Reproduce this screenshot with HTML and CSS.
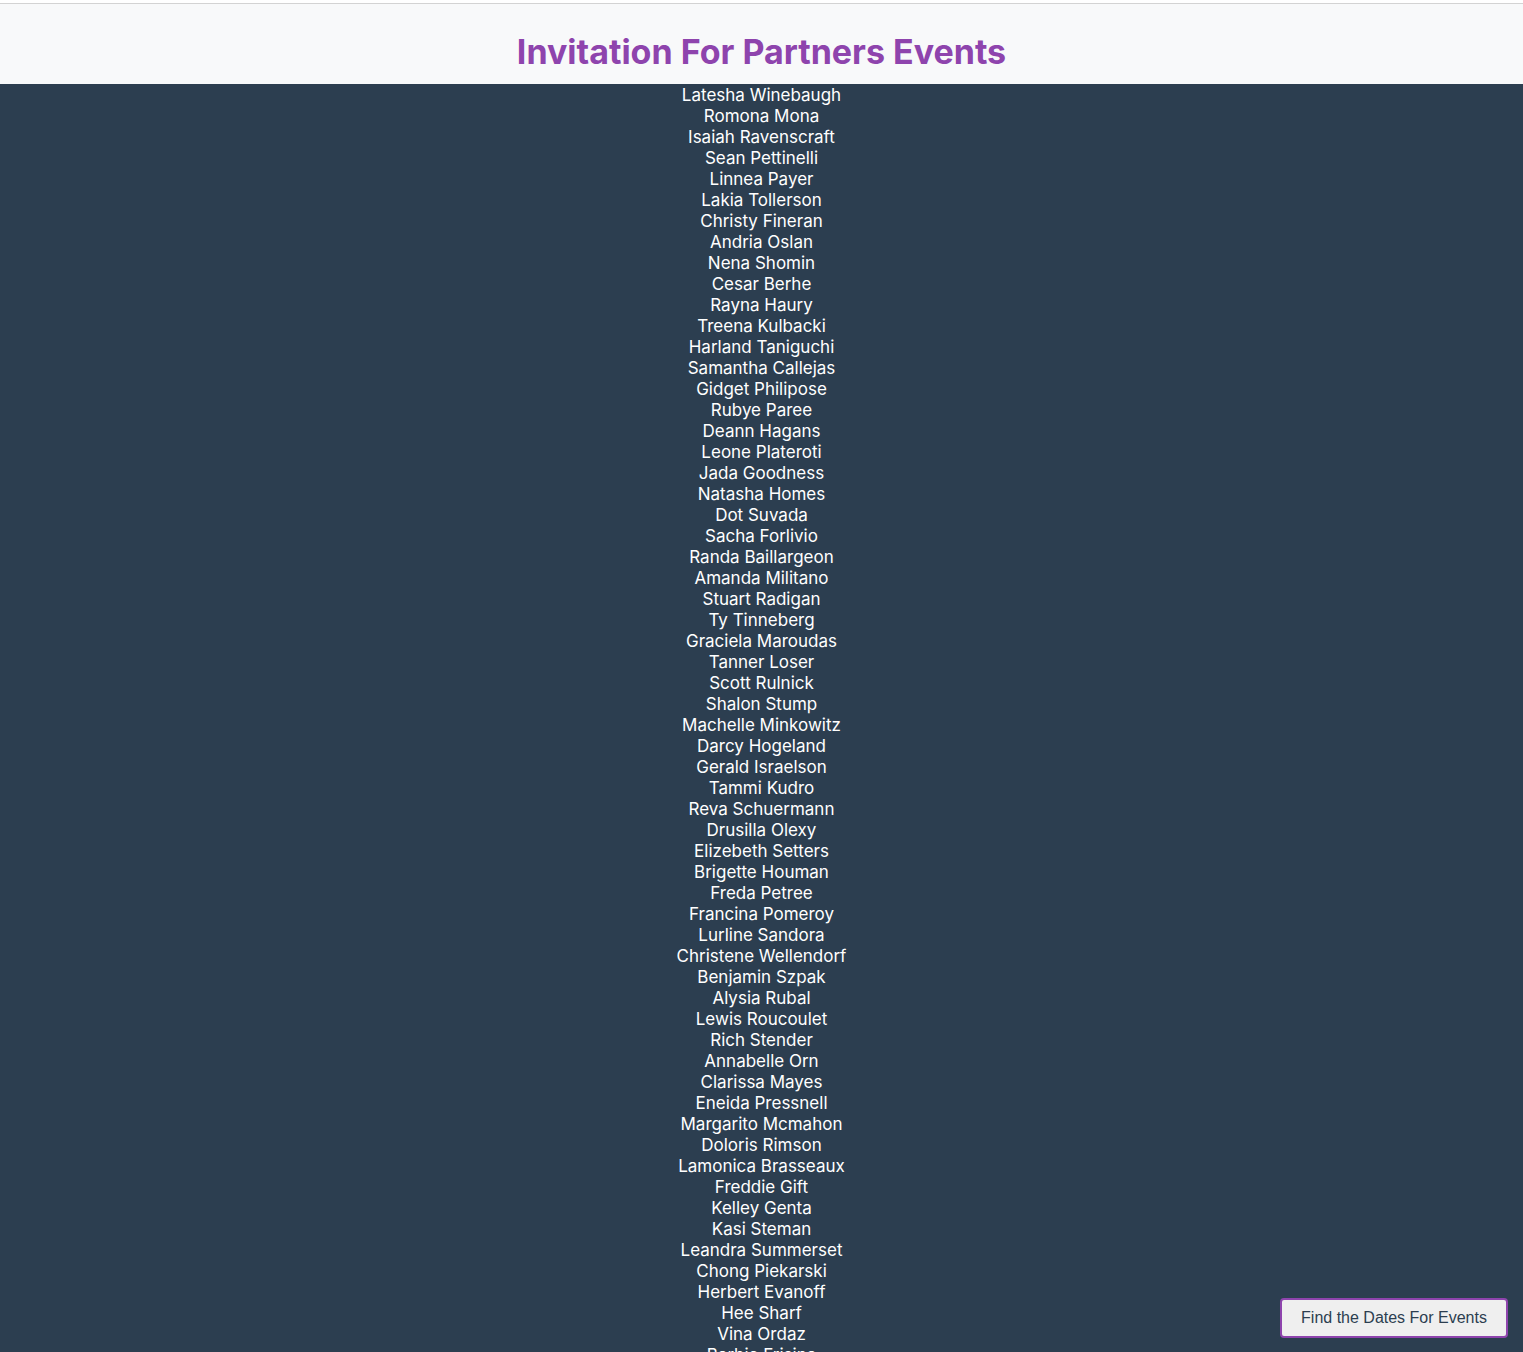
FILE: index.html
```html
<!DOCTYPE html>
<html lang="en">
<head>
<meta charset="utf-8">
<title>Invitation For Partners Events</title>
<link rel="stylesheet" href="styles.css">
</head>
<body>
<div class="topline"></div>
<header class="header">
  <h1 class="title">Invitation For Partners Events</h1>
</header>
<main class="list">
  <div class="name">Latesha Winebaugh</div>
  <div class="name">Romona Mona</div>
  <div class="name">Isaiah Ravenscraft</div>
  <div class="name">Sean Pettinelli</div>
  <div class="name">Linnea Payer</div>
  <div class="name">Lakia Tollerson</div>
  <div class="name">Christy Fineran</div>
  <div class="name">Andria Oslan</div>
  <div class="name">Nena Shomin</div>
  <div class="name">Cesar Berhe</div>
  <div class="name">Rayna Haury</div>
  <div class="name">Treena Kulbacki</div>
  <div class="name">Harland Taniguchi</div>
  <div class="name">Samantha Callejas</div>
  <div class="name">Gidget Philipose</div>
  <div class="name">Rubye Paree</div>
  <div class="name">Deann Hagans</div>
  <div class="name">Leone Plateroti</div>
  <div class="name">Jada Goodness</div>
  <div class="name">Natasha Homes</div>
  <div class="name">Dot Suvada</div>
  <div class="name">Sacha Forlivio</div>
  <div class="name">Randa Baillargeon</div>
  <div class="name">Amanda Militano</div>
  <div class="name">Stuart Radigan</div>
  <div class="name">Ty Tinneberg</div>
  <div class="name">Graciela Maroudas</div>
  <div class="name">Tanner Loser</div>
  <div class="name">Scott Rulnick</div>
  <div class="name">Shalon Stump</div>
  <div class="name">Machelle Minkowitz</div>
  <div class="name">Darcy Hogeland</div>
  <div class="name">Gerald Israelson</div>
  <div class="name">Tammi Kudro</div>
  <div class="name">Reva Schuermann</div>
  <div class="name">Drusilla Olexy</div>
  <div class="name">Elizebeth Setters</div>
  <div class="name">Brigette Houman</div>
  <div class="name">Freda Petree</div>
  <div class="name">Francina Pomeroy</div>
  <div class="name">Lurline Sandora</div>
  <div class="name">Christene Wellendorf</div>
  <div class="name">Benjamin Szpak</div>
  <div class="name">Alysia Rubal</div>
  <div class="name">Lewis Roucoulet</div>
  <div class="name">Rich Stender</div>
  <div class="name">Annabelle Orn</div>
  <div class="name">Clarissa Mayes</div>
  <div class="name">Eneida Pressnell</div>
  <div class="name">Margarito Mcmahon</div>
  <div class="name">Doloris Rimson</div>
  <div class="name">Lamonica Brasseaux</div>
  <div class="name">Freddie Gift</div>
  <div class="name">Kelley Genta</div>
  <div class="name">Kasi Steman</div>
  <div class="name">Leandra Summerset</div>
  <div class="name">Chong Piekarski</div>
  <div class="name">Herbert Evanoff</div>
  <div class="name">Hee Sharf</div>
  <div class="name">Vina Ordaz</div>
  <div class="name">Barbie Frisina</div>
</main>
<button class="find-btn" type="button">Find the Dates For Events</button>
</body>
</html>
```

FILE: styles.css
```css
html, body {
  margin: 0;
  padding: 0;
}
body {
  background: #2c3e50;
  font-family: Inter, "Noto Sans", sans-serif;
}
.topline {
  height: 3px;
  background: #ffffff;
  border-bottom: 1px solid #d3d3d3;
}
.header {
  background: #f8f9fa;
  height: 80px;
  display: flex;
  align-items: center;
  justify-content: center;
}
.title {
  margin: 0;
  padding-top: 14px;
  font-size: 34px;
  font-weight: 700;
  color: #8e44ad;
  letter-spacing: 0;
}
.list {
  display: flex;
  flex-direction: column;
  align-items: center;
  padding-top: 1px;
}
.name {
  color: #ffffff;
  font-size: 17px;
  line-height: 21px;
}
.find-btn {
  position: fixed;
  right: 15px;
  bottom: 14px;
  width: 228px;
  height: 40px;
  background: #efefef;
  border: 2px solid #8e44ad;
  border-radius: 4px;
  color: #2c3e50;
  font-family: "Liberation Sans", Arial, sans-serif;
  font-size: 16px;
  padding: 0;
}
```
